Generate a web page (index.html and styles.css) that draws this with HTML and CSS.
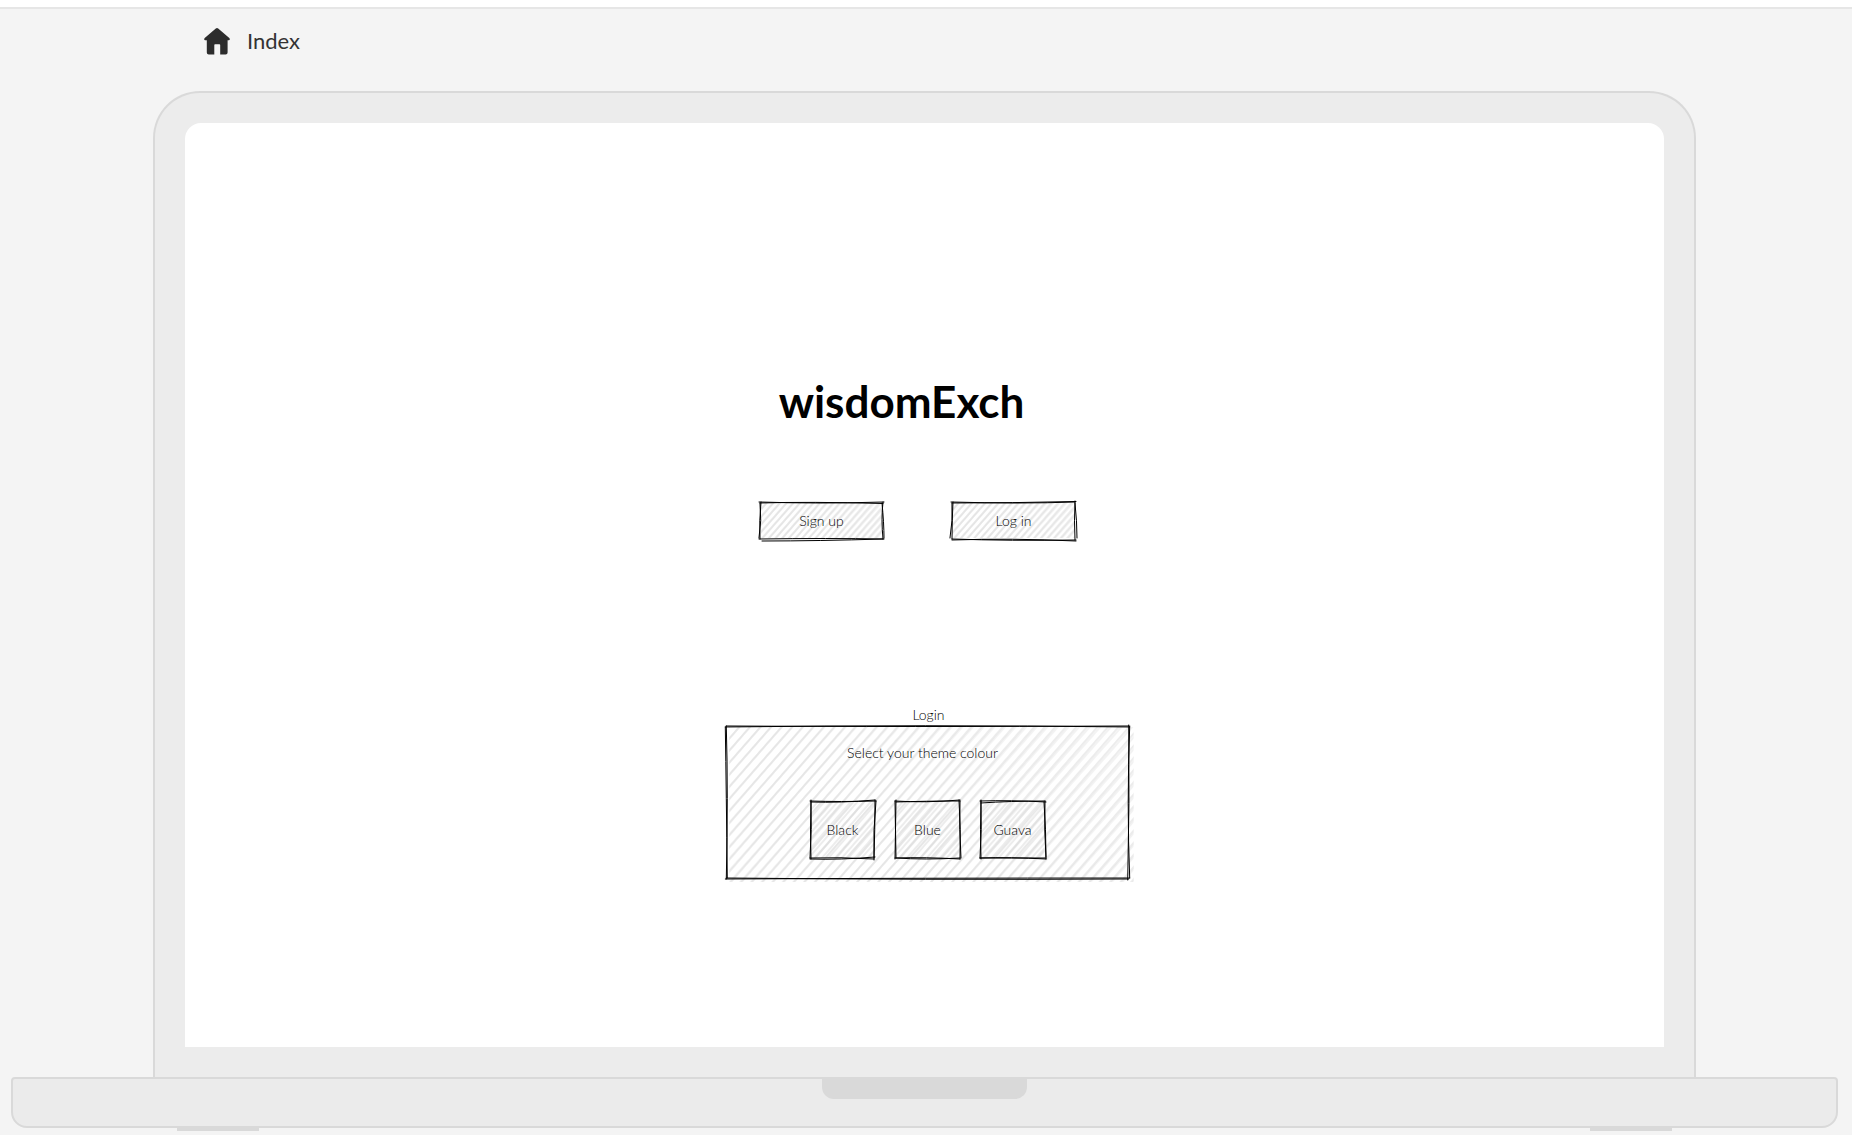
FILE: index.html
```html
<!DOCTYPE html>
<html lang="en">
<head>
<meta charset="utf-8">
<title>wisdomExch</title>
<link rel="stylesheet" href="styles.css">
</head>
<body>
<svg class="defs" aria-hidden="true">
  <defs>
    <pattern id="wide" width="8" height="400" patternUnits="userSpaceOnUse" patternTransform="rotate(41)">
      <path d="M4 0V400" stroke="#dadada" stroke-width="1"/>
    </pattern>
    <pattern id="wide-second" width="8" height="400" patternUnits="userSpaceOnUse" patternTransform="rotate(41.500)">
      <path d="M4 0V400" stroke="#e6e6e6" stroke-width="1"/>
    </pattern>
    <pattern id="tight" width="5" height="200" patternUnits="userSpaceOnUse" patternTransform="rotate(41)">
      <path d="M2 0V200" stroke="#dadada" stroke-width="1"/>
    </pattern>
    <pattern id="tight-second" width="5" height="200" patternUnits="userSpaceOnUse" patternTransform="rotate(42)">
      <path d="M2 0V200" stroke="#e4e4e4" stroke-width="1"/>
    </pattern>
  </defs>
</svg>
<header class="topbar"></header>
<nav class="crumbs">
  <a class="home" href="#">
    <svg class="home-icon" viewBox="0 0 26 27" aria-hidden="true"><path d="M11.800.500Q13-.4 14.200.500L25.300 10Q26.600 11.600 25 12.300H23.600V24.500Q23.600 26.500 21.600 26.500H16.200V17Q16.200 16.300 15.500 16.300H11Q10.300 16.300 10.300 17V26.500H4.800Q2.800 26.500 2.800 24.500V12.300H1Q-.6 11.500.700 10Z"/></svg>
    <span>Index</span>
  </a>
</nav>
<div class="laptop">
  <div class="lid">
    <main class="screen">
      <div class="content">
        <h1>wisdomExch</h1>
        <div class="actions">
          <button class="sketch action" type="button">
            <svg viewBox="0 0 126 40" aria-hidden="true"><path fill="url(#tight-second)" d="M1 2H124V37H1Z"/><path fill="url(#tight)" d="M1 2H124V37H1Z"/><path class="ink" d="M1 2Q50 .5 124 2.500M0 1Q60 3 125 1M1 2Q3 20 0 37M2 1Q0 20 1 38M124 1Q122 18 124 38M123 2Q125 22 125 37M0 38Q70 37 125 38M3 40Q60 40 124 38"/></svg>
            <span>Sign up</span>
          </button>
          <button class="sketch action" type="button">
            <svg viewBox="0 0 126 40" aria-hidden="true"><path fill="url(#tight-second)" d="M1 2H124V37H1Z"/><path fill="url(#tight)" d="M1 2H124V37H1Z"/><path class="ink" d="M1 2Q60 2 125 .5M0 1Q70 3 124 1M2 1Q1 20 1 38M1 2Q2 20-1 37M124 0Q123 20 124 39M124 2Q126 20 126 37M1 39Q60 37 125 40M1 38Q60 40 125 39"/></svg>
            <span>Log in</span>
          </button>
        </div>
        <section class="login">
          <h2>Login</h2>
          <div class="sketch panel">
            <svg viewBox="0 0 408 156" aria-hidden="true"><path fill="url(#wide-second)" d="M4 2H411V158H4Z"/><path fill="url(#wide)" d="M4 2H411V158H4Z"/><path class="ink" d="M0 2Q200-.5 407 2M1 1Q180 2 406 1M1 1Q3 70 1 155M0 2Q1 70 2 154M406 0Q407 80 405 156M407 1Q404 80 407 154M0 155Q200 154 407 154M1 154Q200 156 406 155"/></svg>
            <p>Select your theme colour</p>
            <div class="themes">
              <button class="sketch theme" type="button">
                <svg viewBox="0 0 66 60" aria-hidden="true"><path fill="url(#tight)" d="M1 1H65V58H1Z"/><path class="ink" d="M0 1Q30 2 66 1M1 2Q30 3 65 0M1 0Q2 30 0 58M1 1Q0 30 1 59M66 1Q63 30 64 60M65 0Q65 30 64 58M0 59Q30 60 65 57M0 58Q30 57 64 59"/></svg>
                <span>Black</span>
              </button>
              <button class="sketch theme" type="button">
                <svg viewBox="0 0 66 60" aria-hidden="true"><path fill="url(#tight)" d="M1 1H65V58H1Z"/><path class="ink" d="M0 1Q30 3 65 0M1 2Q30 1 65 1M1 0Q0 30 1 58M0 1Q1 30 0 59M65 1Q64 30 66 58M64 0Q66 30 65 59M0 58Q30 57 65 59M1 58Q30 60 65 58"/></svg>
                <span>Blue</span>
              </button>
              <button class="sketch theme" type="button">
                <svg viewBox="0 0 66 60" aria-hidden="true"><path fill="url(#tight)" d="M1 1H65V58H1Z"/><path class="ink" d="M0 1Q30 0 66 2M1 3Q30 1 65 1M1 0Q0 30 1 59M1 1Q2 30 0 58M65 1Q64 30 66 59M64 2Q66 30 66 57M0 58Q30 57 66 59M0 58Q30 58 66 58"/></svg>
                <span>Guava</span>
              </button>
            </div>
          </div>
        </section>
      </div>
    </main>
  </div>
  <div class="base"><div class="notch"></div></div>
  <div class="feet"><div class="foot"></div><div class="foot"></div></div>
</div>
</body>
</html>
```
FILE: styles.css
```css
* { box-sizing: border-box; }
body {
  margin: 0;
  background: #f4f4f4;
  color: #000;
  font-family: Lato, "Liberation Sans", sans-serif;
}
.defs { position: absolute; width: 0; height: 0; }
.topbar {
  height: 9px;
  background: #fff;
  border-bottom: 2px solid #e6e6e6;
}
.crumbs { display: flex; height: 82px; padding: 16px 204px; }
.home {
  display: flex;
  align-items: center;
  gap: 17px;
  height: 32px;
  color: #333;
  font-size: 22px;
  line-height: 32px;
  text-decoration: none;
}
.home-icon { width: 26px; height: 27px; fill: #2c2c2c; }
.laptop { padding: 0 14px 4px 11px; }
.lid {
  margin: 0 142px;
  padding: 30px 30px;
  background: #ececec;
  border: 2px solid #d9d9d9;
  border-bottom: 0;
  border-radius: 47px 47px 0 0;
}
.screen {
  display: flex;
  justify-content: center;
  min-height: 924px;
  padding: 246px 0 160px;
  background: #fff;
  border-radius: 16px 16px 0 0;
}
.content { width: 410px; }
h1 {
  margin: 0 0 68px;
  padding-right: 46px;
  font-size: 44px;
  line-height: 64px;
  text-align: center;
}
.actions {
  display: flex;
  justify-content: center;
  gap: 66px;
  padding-right: 14px;
}
.sketch { position: relative; }
.sketch > svg {
  position: absolute;
  inset: 0;
  width: 100%;
  height: 100%;
  overflow: visible;
}
.sketch > span, .sketch > p, .themes { position: relative; }
.ink { fill: none; stroke: #000; stroke-width: 1; stroke-linecap: round; }
button {
  padding: 0;
  border: 0;
  background: none;
  color: #000;
  font: 300 14px/20px Lato, "Liberation Sans", sans-serif;
}
.action { width: 126px; height: 40px; }
.login { margin-top: 164px; padding-left: 4px; }
h2, p {
  margin: 0;
  font-size: 14px;
  font-weight: 300;
  line-height: 20px;
  text-align: center;
}
.login h2 { padding-left: 4px; }
.panel { width: 408px; padding: 18px 0 20px; }
.panel p { padding-right: 10px; }
.themes {
  display: flex;
  justify-content: center;
  gap: 19px;
  margin-top: 37px;
}
.theme { width: 66px; height: 60px; }
.base {
  height: 51px;
  background: #ebebeb;
  border: 2px solid #d9d9d9;
  border-radius: 4px 4px 16px 16px;
}
.notch {
  width: 205px;
  height: 20px;
  margin: 0 auto;
  background: #d9d9d9;
  border-radius: 0 0 12px 12px;
}
.feet { display: flex; justify-content: space-between; padding: 0 166px; }
.foot { width: 82px; height: 3px; background: #d9d9d9; }
```
